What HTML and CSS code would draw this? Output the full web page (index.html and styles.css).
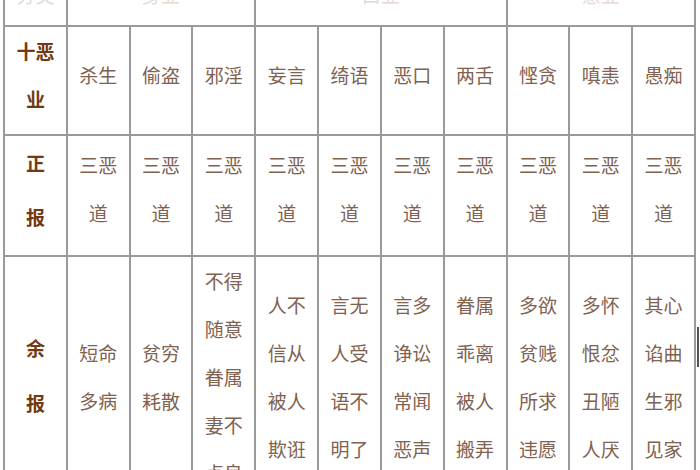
FILE: index.html
```html
<!DOCTYPE html>
<html lang="zh">
<head>
<meta charset="utf-8">
<title>十恶业果报表</title>
<link rel="stylesheet" href="styles.css">
</head>
<body>
<div class="view">
  <table class="karma">
    <colgroup>
      <col><col><col><col><col><col><col><col><col><col><col>
    </colgroup>
    <tr class="row-top">
      <td class="faint">分类</td>
      <td class="faint" colspan="3">身业</td>
      <td class="faint" colspan="4">口业</td>
      <td class="faint" colspan="3">意业</td>
    </tr>
    <tr class="row-acts">
      <th class="head tight">十恶<br>业</th>
      <td>杀生</td><td>偷盗</td><td>邪淫</td><td>妄言</td><td>绮语</td>
      <td>恶口</td><td>两舌</td><td>悭贪</td><td>嗔恚</td><td>愚痴</td>
    </tr>
    <tr class="row-main">
      <th class="head">正<br>报</th>
      <td>三恶<br>道</td><td>三恶<br>道</td><td>三恶<br>道</td><td>三恶<br>道</td><td>三恶<br>道</td>
      <td>三恶<br>道</td><td>三恶<br>道</td><td>三恶<br>道</td><td>三恶<br>道</td><td>三恶<br>道</td>
    </tr>
    <tr class="row-rest">
      <th class="head">余<br>报</th>
      <td>短命<br>多病</td>
      <td>贫穷<br>耗散</td>
      <td>不得<br>随意<br>眷属<br>妻不<br>贞良</td>
      <td>人不<br>信从<br>被人<br>欺诳</td>
      <td>言无<br>人受<br>语不<br>明了</td>
      <td>言多<br>诤讼<br>常闻<br>恶声</td>
      <td>眷属<br>乖离<br>被人<br>搬弄</td>
      <td>多欲<br>贫贱<br>所求<br>违愿</td>
      <td>多怀<br>恨忿<br>丑陋<br>人厌</td>
      <td>其心<br>谄曲<br>生邪<br>见家</td>
    </tr>
  </table>
  <div class="edge-mark"></div>
</div>
</body>
</html>
```

FILE: styles.css
```css
html, body {
  margin: 0;
  padding: 0;
  background: #ffffff;
  overflow: hidden;
  height: 470px;
}

.view {
  position: relative;
  width: 700px;
  height: 470px;
  overflow: hidden;
}

.karma {
  border-collapse: collapse;
  table-layout: fixed;
  width: 693px;
  margin: -31px 0 0 3px;
  font-family: "Noto Sans CJK SC", "Noto Sans", sans-serif;
  font-size: 19px;
  line-height: 48px;
  color: #7f6250;
}

.karma td,
.karma th {
  border: 2px solid #9a9a9a;
  padding: 0 0 12px 0;
  text-align: center;
  vertical-align: middle;
  font-weight: normal;
}

.karma .row-top td {
  padding-bottom: 6px;
}

.faint {
  color: #e4d9d2;
}

.karma .row-acts td,
.karma .row-acts th {
  padding-bottom: 11px;
}

.karma .row-main td {
  padding: 5px 0 18px 0;
}

.karma .row-main th {
  padding: 0 0 9px 0;
  line-height: 54px;
  vertical-align: top;
}

.karma .row-rest th {
  padding-bottom: 16px;
}

.karma .head {
  font-weight: bold;
  color: #733a12;
  line-height: 55px;
}

.karma .head.tight {
  line-height: 48px;
}

.edge-mark {
  position: absolute;
  left: 697px;
  top: 327px;
  width: 2px;
  height: 40px;
  background: #555555;
}
```
